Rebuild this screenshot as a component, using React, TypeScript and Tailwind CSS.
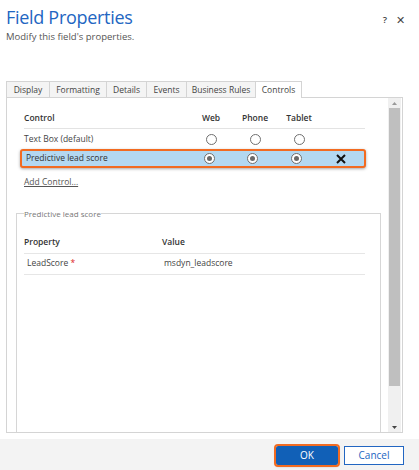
import React from "react";

const Radio = ({ on }: { on?: boolean }) => (
  <span className="flex h-[11px] w-[11px] items-center justify-center rounded-full border border-[#6f6f6f] bg-white">
    {on && <span className="h-[5px] w-[5px] rounded-full bg-[#6a6a6a]" />}
  </span>
);

export default function App() {
  const tabs = ["Display", "Formatting", "Details", "Events", "Business Rules", "Controls"];
  const widths = ["w-[43px]", "w-[57px]", "w-[40px]", "w-[40px]", "w-[69px]", "w-[47px]"];
  return (
    <div
      className="flex h-[470px] w-[419px] flex-col bg-white text-[#333]"
      style={{ fontFamily: '"Open Sans", "Noto Sans", sans-serif' }}
    >
      {/* header */}
      <div className="flex items-start justify-between pl-[6px] pr-[14px] pt-[4px]">
        <div>
          <div className="text-[18px] leading-[26px] tracking-[-0.3px] text-[#2266c2]">Field Properties</div>
          <div className="text-[9.5px] leading-[13px] text-[#555]">Modify this field's properties.</div>
        </div>
        <div className="mt-[8px] flex items-center gap-[9px] text-[9.5px] text-[#444]">
          <span className="font-semibold">?</span>
          <span className="text-[11px]">✕</span>
        </div>
      </div>

      {/* tabs */}
      <div className="ml-[6px] mt-[38px] flex h-[16px] text-[8.5px] leading-[15px] text-[#444]">
        {tabs.map((t, i) => (
          <div
            key={t}
            className={`${widths[i]} relative flex justify-center border border-r-0 last:border-r border-[#d4d4d4] ${
              i === 5 ? "z-10 h-[17px] border-b-0 bg-white" : "bg-[#f4f4f4] border-b-0"
            }`}
          >
            {t}
          </div>
        ))}
      </div>

      {/* panel */}
      <div className="mx-[6px] flex h-[336px] w-[397px] border border-[#d4d4d4] bg-white">
        <div className="flex flex-1 flex-col pl-[9px] pt-[15px] text-[8.5px]">
          {/* controls table */}
          <div className="ml-[8px] w-[341px]">
            <div className="flex h-[16px] items-center border-b border-[#e3e3e3] pb-[4px] font-semibold text-[#333]">
              <span className="w-[165px]">Control</span>
              <span className="w-[44px] text-center">Web</span>
              <span className="w-[44px] text-center">Phone</span>
              <span className="w-[44px] text-center">Tablet</span>
            </div>
            <div className="flex h-[20px] items-center text-[#444]">
              <span className="w-[165px]">Text Box (default)</span>
              <span className="flex w-[44px] justify-center"><Radio /></span>
              <span className="flex w-[44px] justify-center"><Radio /></span>
              <span className="flex w-[44px] justify-center"><Radio /></span>
            </div>
          </div>
          <div className="ml-[4px] flex h-[19px] w-[346px] items-center rounded-[3px] border-[2px] border-[#f26b21] bg-[#b3d8f1] pl-[4px] text-[#333] shadow-[0_1px_3px_rgba(0,0,0,0.35)]">
            <span className="w-[163px]">Predictive lead score</span>
            <span className="flex w-[44px] justify-center"><Radio on /></span>
            <span className="flex w-[44px] justify-center"><Radio on /></span>
            <span className="flex w-[44px] justify-center"><Radio on /></span>
            <span className="flex w-[46px] justify-center">
              <svg width="10" height="10" viewBox="0 0 10 10"><path d="M1 1L9 9M9 1L1 9" stroke="#111" strokeWidth="2" /></svg>
            </span>
          </div>
          <div className="ml-[8px] mt-[8px] text-[#555] underline">Add Control...</div>

          {/* fieldset */}
          <fieldset className="mt-[19px] w-[365px] flex-1 border border-b-0 border-[#d6d6d6] pl-[7px]">
            <legend className="ml-[0px] text-[8px] text-[#777]">Predictive lead score</legend>
            <div className="w-[341px]">
              <div className="mt-[16px] flex h-[18px] items-center border-b border-[#e6e6e6] pb-[4px] font-semibold">
                <span className="w-[138px]">Property</span>
                <span>Value</span>
              </div>
              <div className="flex h-[21px] items-center border-b border-[#e6e6e6] pl-[3px] text-[#444]">
                <span className="w-[137px]">
                  LeadScore <span className="text-[#d22]">*</span>
                </span>
                <span>msdyn_leadscore</span>
              </div>
            </div>
          </fieldset>
        </div>
        {/* scrollbar */}
        <div className="mr-[1px] flex w-[13px] flex-col bg-[#f0f0f0]">
          <div className="flex h-[10px] items-center justify-center">
            <svg width="5" height="3" viewBox="0 0 5 3"><path d="M0 3L2.5 0L5 3Z" fill="#999" /></svg>
          </div>
          <div className="mx-[1px] h-[278px] bg-[#bfbfbf]" />
          <div className="flex-1" />
          <div className="flex h-[10px] items-center justify-center">
            <svg width="5" height="3" viewBox="0 0 5 3"><path d="M0 0L5 0L2.5 3Z" fill="#444" /></svg>
          </div>
        </div>
      </div>

      {/* footer */}
      <div className="mt-auto flex h-[31px] items-center justify-end gap-[6px] bg-[#f3f3f3] pr-[15px] pt-[2px]">
        <button className="h-[19px] w-[62px] rounded-[2px] bg-[#1160b7] text-[10px] text-white outline outline-[2px] outline-[#f26b21] shadow-[0_1px_3px_rgba(0,0,0,0.4)]">
          OK
        </button>
        <button className="h-[19px] w-[60px] border border-[#2266c2] bg-white text-[10px] text-[#2266c2]">
          Cancel
        </button>
      </div>
    </div>
  );
}
